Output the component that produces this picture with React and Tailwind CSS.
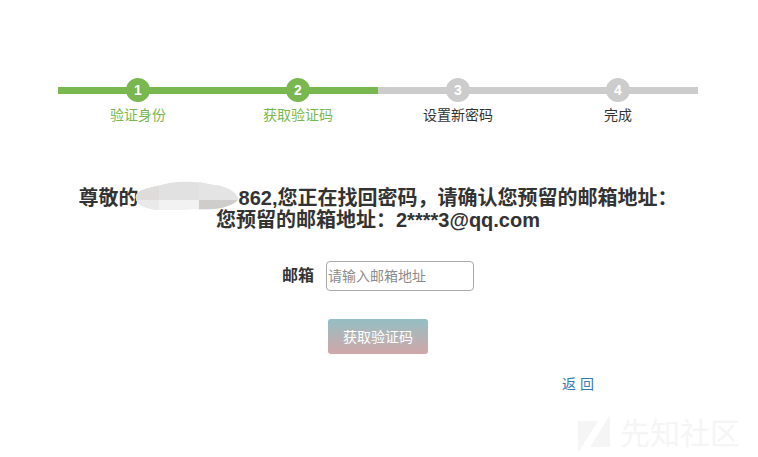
const steps = [
  { label: '验证身份', done: true },
  { label: '获取验证码', done: true },
  { label: '设置新密码', done: false },
  { label: '完成', done: false },
];

function Step({ number, label, done }) {
  return (
    <li className="flex flex-1 flex-col items-center">
      <div className="flex w-full items-center">
        <span className={`mt-px h-[7px] flex-1 ${done ? 'bg-[#78b84f]' : 'bg-[#cccccc]'}`} />
        <span
          className={`-mx-px flex size-6 items-center justify-center rounded-full text-sm leading-6 font-bold text-white ${done ? 'bg-[#78b84f]' : 'bg-[#cccccc]'}`}
        >
          {number}
        </span>
        <span className={`mt-px h-[7px] flex-1 ${done ? 'bg-[#78b84f]' : 'bg-[#cccccc]'}`} />
      </div>
      <span className={`mt-[3px] text-sm leading-5 ${done ? 'text-[#78b84f]' : 'text-[#333333]'}`}>
        {label}
      </span>
    </li>
  );
}

function MaskedName() {
  return (
    <svg
      className="-mr-1 -ml-1 mb-1 inline-block h-[30px] w-[108px] align-middle"
      viewBox="0 0 108 30"
      aria-hidden="true"
    >
      <defs>
        <clipPath id="mask-shape">
          <path d="M1 14C4 9 10 8 22 5C34 1 46 0 58 1C68 1 76 4 86 5C95 8 102 12 103 18C102 22 94 25 86 27C76 29 66 28 58 28C48 29 38 28 28 29C18 29 10 27 4 23C1 20 0 17 1 14Z" />
        </clipPath>
      </defs>
      <g clipPath="url(#mask-shape)">
        <path fill="#e1e1e1" d="M0 0h104v30H0z" />
        <path fill="#dddcdb" d="M0 0h24v20H0z" />
        <path fill="#e4e4e4" d="M64 0h40v20H64z" />
        <path fill="#e9e9e9" d="M0 19h24v11H0z" />
        <path fill="#f2f2f2" d="M24 19h40v11H24z" />
        <path fill="#cfcdcc" d="M64 19h40v11H64z" />
      </g>
    </svg>
  );
}

export default function App() {
  return (
    <main className="flex min-h-screen flex-col items-center bg-white pt-[78px] pr-0.5 font-['Liberation_Sans','Noto_Sans_CJK_SC',sans-serif] text-[#333333]">
      <ol className="flex w-full max-w-[640px]">
        {steps.map((step, i) => (
          <Step key={step.label} number={i + 1} {...step} />
        ))}
      </ol>

      <h1 className="mt-[62px] text-center text-xl leading-[22px] font-bold">
        <span className="flex h-[22px] items-center justify-center">
          <span>尊敬的</span>
          <MaskedName />
          <span>862,您正在找回密码，请确认您预留的邮箱地址：</span>
        </span>
        <span className="block">您预留的邮箱地址：2****3@qq.com</span>
      </h1>

      <form className="mt-[30px] flex flex-col items-center" onSubmit={(e) => e.preventDefault()}>
        <div className="flex items-center gap-3">
          <label htmlFor="email" className="text-base font-bold">
            邮箱
          </label>
          <input
            id="email"
            type="text"
            placeholder="请输入邮箱地址"
            className="h-[30px] w-[148px] rounded border border-[#a9a9a9] px-px text-sm placeholder:text-[#8c8c8c]"
          />
        </div>
        <button
          type="submit"
          className="mt-7 h-[35px] w-[100px] rounded-[3px] bg-linear-to-b from-[#92bec3] to-[#cfa6a8] text-sm text-white"
        >
          获取验证码
        </button>
      </form>

      <a href="#back" className="mt-5 ml-[400px] text-sm leading-5 text-[#337ab7]">
        返 回
      </a>

      <div className="mt-5 mr-4 flex items-center gap-2.5 self-end text-[#f5f5f5]">
        <svg className="h-10 w-8" viewBox="0 0 32 40" fill="currentColor" aria-hidden="true">
          <path d="M0 7H20L0 39Z" />
          <path d="M32 1V33H12Z" />
        </svg>
        <span className="text-[30px] leading-10">先知社区</span>
      </div>
    </main>
  );
}
